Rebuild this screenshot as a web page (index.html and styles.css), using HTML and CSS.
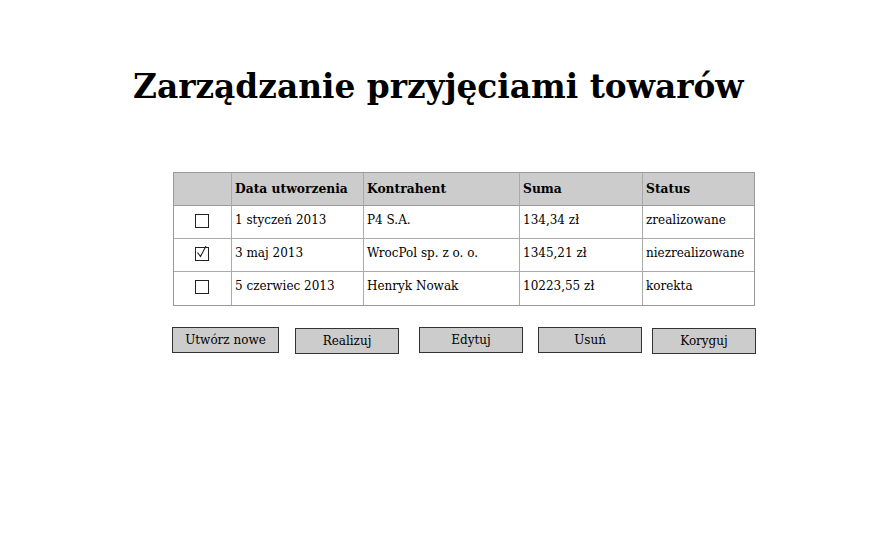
FILE: index.html
```html
<!DOCTYPE html>
<html lang="pl">
<head>
<meta charset="utf-8">
<link rel="stylesheet" href="styles.css">
</head>
<body>
<div class="page">
  <h1 class="title">Zarządzanie przyjęciami towarów</h1>
  <div class="grid">
    <div class="cell head"></div>
    <div class="cell head">Data utworzenia</div>
    <div class="cell head">Kontrahent</div>
    <div class="cell head">Suma</div>
    <div class="cell head">Status</div>

    <div class="cell chk"><span class="box"></span></div>
    <div class="cell">1 styczeń 2013</div>
    <div class="cell">P4 S.A.</div>
    <div class="cell">134,34 zł</div>
    <div class="cell">zrealizowane</div>

    <div class="cell chk"><span class="box"><svg viewBox="0 0 14 14" width="14" height="14"><path d="M2.5 7.5 L5.5 11.5 L11 1" fill="none" stroke="#222" stroke-width="1.1"/></svg></span></div>
    <div class="cell">3 maj 2013</div>
    <div class="cell">WrocPol sp. z o. o.</div>
    <div class="cell">1345,21 zł</div>
    <div class="cell">niezrealizowane</div>

    <div class="cell chk last"><span class="box"></span></div>
    <div class="cell last">5 czerwiec 2013</div>
    <div class="cell last">Henryk Nowak</div>
    <div class="cell last">10223,55 zł</div>
    <div class="cell last">korekta</div>
  </div>
  <div class="buttons">
    <div class="btn b1">Utwórz nowe</div>
    <div class="btn b2">Realizuj</div>
    <div class="btn b3">Edytuj</div>
    <div class="btn b4">Usuń</div>
    <div class="btn b5">Koryguj</div>
  </div>
</div>
</body>
</html>
```
FILE: styles.css
```css
html, body {
  margin: 0;
  padding: 0;
  background: #fff;
}
body {
  font-family: "DejaVu Serif", serif;
  color: #000;
  width: 891px;
  height: 536px;
  overflow: hidden;
}
.page {
  padding-top: 65px;
}
.title {
  margin: 0;
  padding-left: 133px;
  font-size: 32.8px;
  font-weight: bold;
  line-height: 44px;
  height: 44px;
  white-space: nowrap;
}
.grid {
  margin: 63px 0 0 173px;
  width: 582px;
  display: grid;
  grid-template-columns: 57px 132px 156px 123px 112px;
  grid-template-rows: 33px 33px 33px 33px;
  border: 1px solid #999;
  box-sizing: border-box;
  font-size: 12px;
}
.cell {
  border-left: 1px solid #aaa;
  border-bottom: 1px solid #aaa;
  padding: 6px 0 0 3px;
  box-sizing: border-box;
  line-height: 16px;
  white-space: nowrap;
}
.cell:nth-child(5n+1) {
  border-left: none;
}
.cell.last {
  border-bottom: none;
}
.head {
  background: #cccccc;
  font-weight: bold;
  font-size: 12.3px;
  padding-top: 8px;
  border-bottom-color: #999;
}
.chk {
  display: flex;
  justify-content: center;
  padding: 8px 0 0 0;
}
.box {
  width: 14px;
  height: 14px;
  border: 1px solid #222;
  box-sizing: border-box;
  position: relative;
  margin-left: -1px;
}
.box svg {
  position: absolute;
  left: -1px;
  top: -3px;
}
.buttons {
  position: relative;
  margin-top: 21px;
  height: 28px;
}
.btn {
  position: absolute;
  top: 0;
  height: 26px;
  box-sizing: border-box;
  background: #cccccc;
  border: 1px solid #333;
  font-size: 12px;
  line-height: 25px;
  text-align: center;
}
.b1 { left: 172px; width: 107px; }
.b2 { left: 295px; width: 104px; top: 1px; }
.b3 { left: 419px; width: 104px; }
.b4 { left: 538px; width: 104px; }
.b5 { left: 652px; width: 104px; top: 1px; }
```
